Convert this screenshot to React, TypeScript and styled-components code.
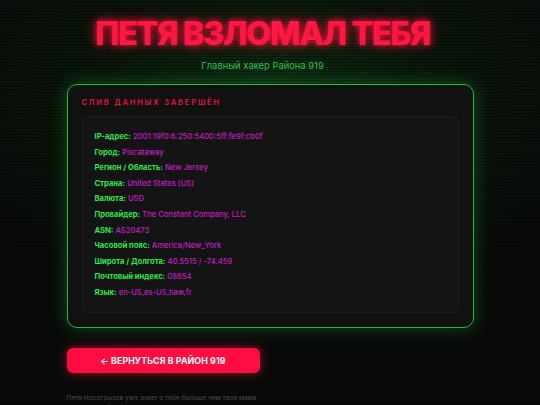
import React from "react";
import styled, { createGlobalStyle } from "styled-components";

const Global = createGlobalStyle`
  html, body { margin: 0; padding: 0; background: #0a0a0a; }
  body { font-family: Inter, "Noto Sans", sans-serif; }
  * { box-sizing: border-box; }
`;

const Page = styled.div`
  position: relative;
  width: 540px;
  height: 405px;
  overflow: hidden;
  background:
    repeating-linear-gradient(to bottom, rgba(0,0,0,0) 0px, rgba(0,0,0,0) 2px, rgba(0,0,0,0.35) 2px, rgba(0,0,0,0.35) 3px),
    radial-gradient(ellipse 70% 55% at 50% 20%, #0d2a12 0%, #0a160c 45%, #090b09 100%);
  display: flex;
  flex-direction: column;
  align-items: center;
  padding-top: 14px;
`;

const Header = styled.header`
  display: flex;
  flex-direction: column;
  align-items: center;
  padding-right: 15px;
`;

const Title = styled.h1`
  margin: 0;
  font-family: Inter, sans-serif;
  font-weight: 800;
  font-size: 32.5px;
  line-height: 40px;
  letter-spacing: -1.4px;
  color: #ff1744;
  text-shadow: 0 0 6px rgba(255, 20, 60, 0.9), 0 0 14px rgba(255, 20, 60, 0.6);
`;

const Subtitle = styled.div`
  margin-top: 6px;
  font-size: 9.4px;
  color: #2fc24a;
`;

const Container = styled.div`
  width: 407px;
  display: flex;
  flex-direction: column;
`;

const Card = styled.section`
  margin-top: 13px;
  background: #111111;
  border: 1px solid #1fb83f;
  border-radius: 10px;
  padding: 12px 14px 14px 14px;
  box-shadow: 0 0 18px rgba(30, 200, 60, 0.35);
`;

const CardHeading = styled.h2`
  margin: 0 0 7px 0;
  font-size: 7.4px;
  font-weight: 600;
  letter-spacing: 1.9px;
  color: #e8143c;
  line-height: 12px;
`;

const InfoBox = styled.div`
  background: #141414;
  border: 1px solid #1c1c1c;
  border-radius: 6px;
  padding: 15px 12px 14px 12px;
  display: flex;
  flex-direction: column;
  gap: 5.6px;
`;

const Row = styled.div`
  font-size: 7.6px;
  line-height: 10px;
  white-space: nowrap;
`;

const Label = styled.span`
  color: #2ee84e;
  font-weight: 700;
`;

const Value = styled.span`
  color: #c21ec4;
  font-weight: 500;
`;

const Button = styled.button`
  margin-top: 20px;
  align-self: flex-start;
  width: 193px;
  height: 25px;
  border: none;
  border-radius: 6px;
  background: #ff0d40;
  color: #fff;
  font-family: Inter, sans-serif;
  font-weight: 700;
  font-size: 8.8px;
  letter-spacing: 0.1px;
  box-shadow: 0 0 12px rgba(255, 13, 64, 0.55);
  cursor: pointer;
`;

const Footer = styled.div`
  margin-top: 21px;
  font-size: 6.6px;
  color: #4a4a4a;
`;

const rows: [string, string][] = [
  ["IP-адрес:", "2001:19f0:6:250:5400:5ff:fe9f:cb0f"],
  ["Город:", "Piscataway"],
  ["Регион / Область:", "New Jersey"],
  ["Страна:", "United States (US)"],
  ["Валюта:", "USD"],
  ["Провайдер:", "The Constant Company, LLC"],
  ["ASN:", "AS20473"],
  ["Часовой пояс:", "America/New_York"],
  ["Широта / Долгота:", "40.5515 / -74.459"],
  ["Почтовый индекс:", "08854"],
  ["Язык:", "en-US,es-US,haw,fr"],
];

export default function App() {
  return (
    <>
      <Global />
      <Page>
        <Header>
          <Title>ПЕТЯ ВЗЛОМАЛ ТЕБЯ</Title>
          <Subtitle>Главный хакер Района 919</Subtitle>
        </Header>
        <Container>
          <Card>
            <CardHeading>СЛИВ ДАННЫХ ЗАВЕРШЁН</CardHeading>
            <InfoBox>
              {rows.map(([l, v]) => (
                <Row key={l}>
                  <Label>{l}</Label> <Value>{v}</Value>
                </Row>
              ))}
            </InfoBox>
          </Card>
          <Button>← ВЕРНУТЬСЯ В РАЙОН 919</Button>
          <Footer>Петя Носогрызов уже знает о тебе больше чем твоя мама</Footer>
        </Container>
      </Page>
    </>
  );
}
